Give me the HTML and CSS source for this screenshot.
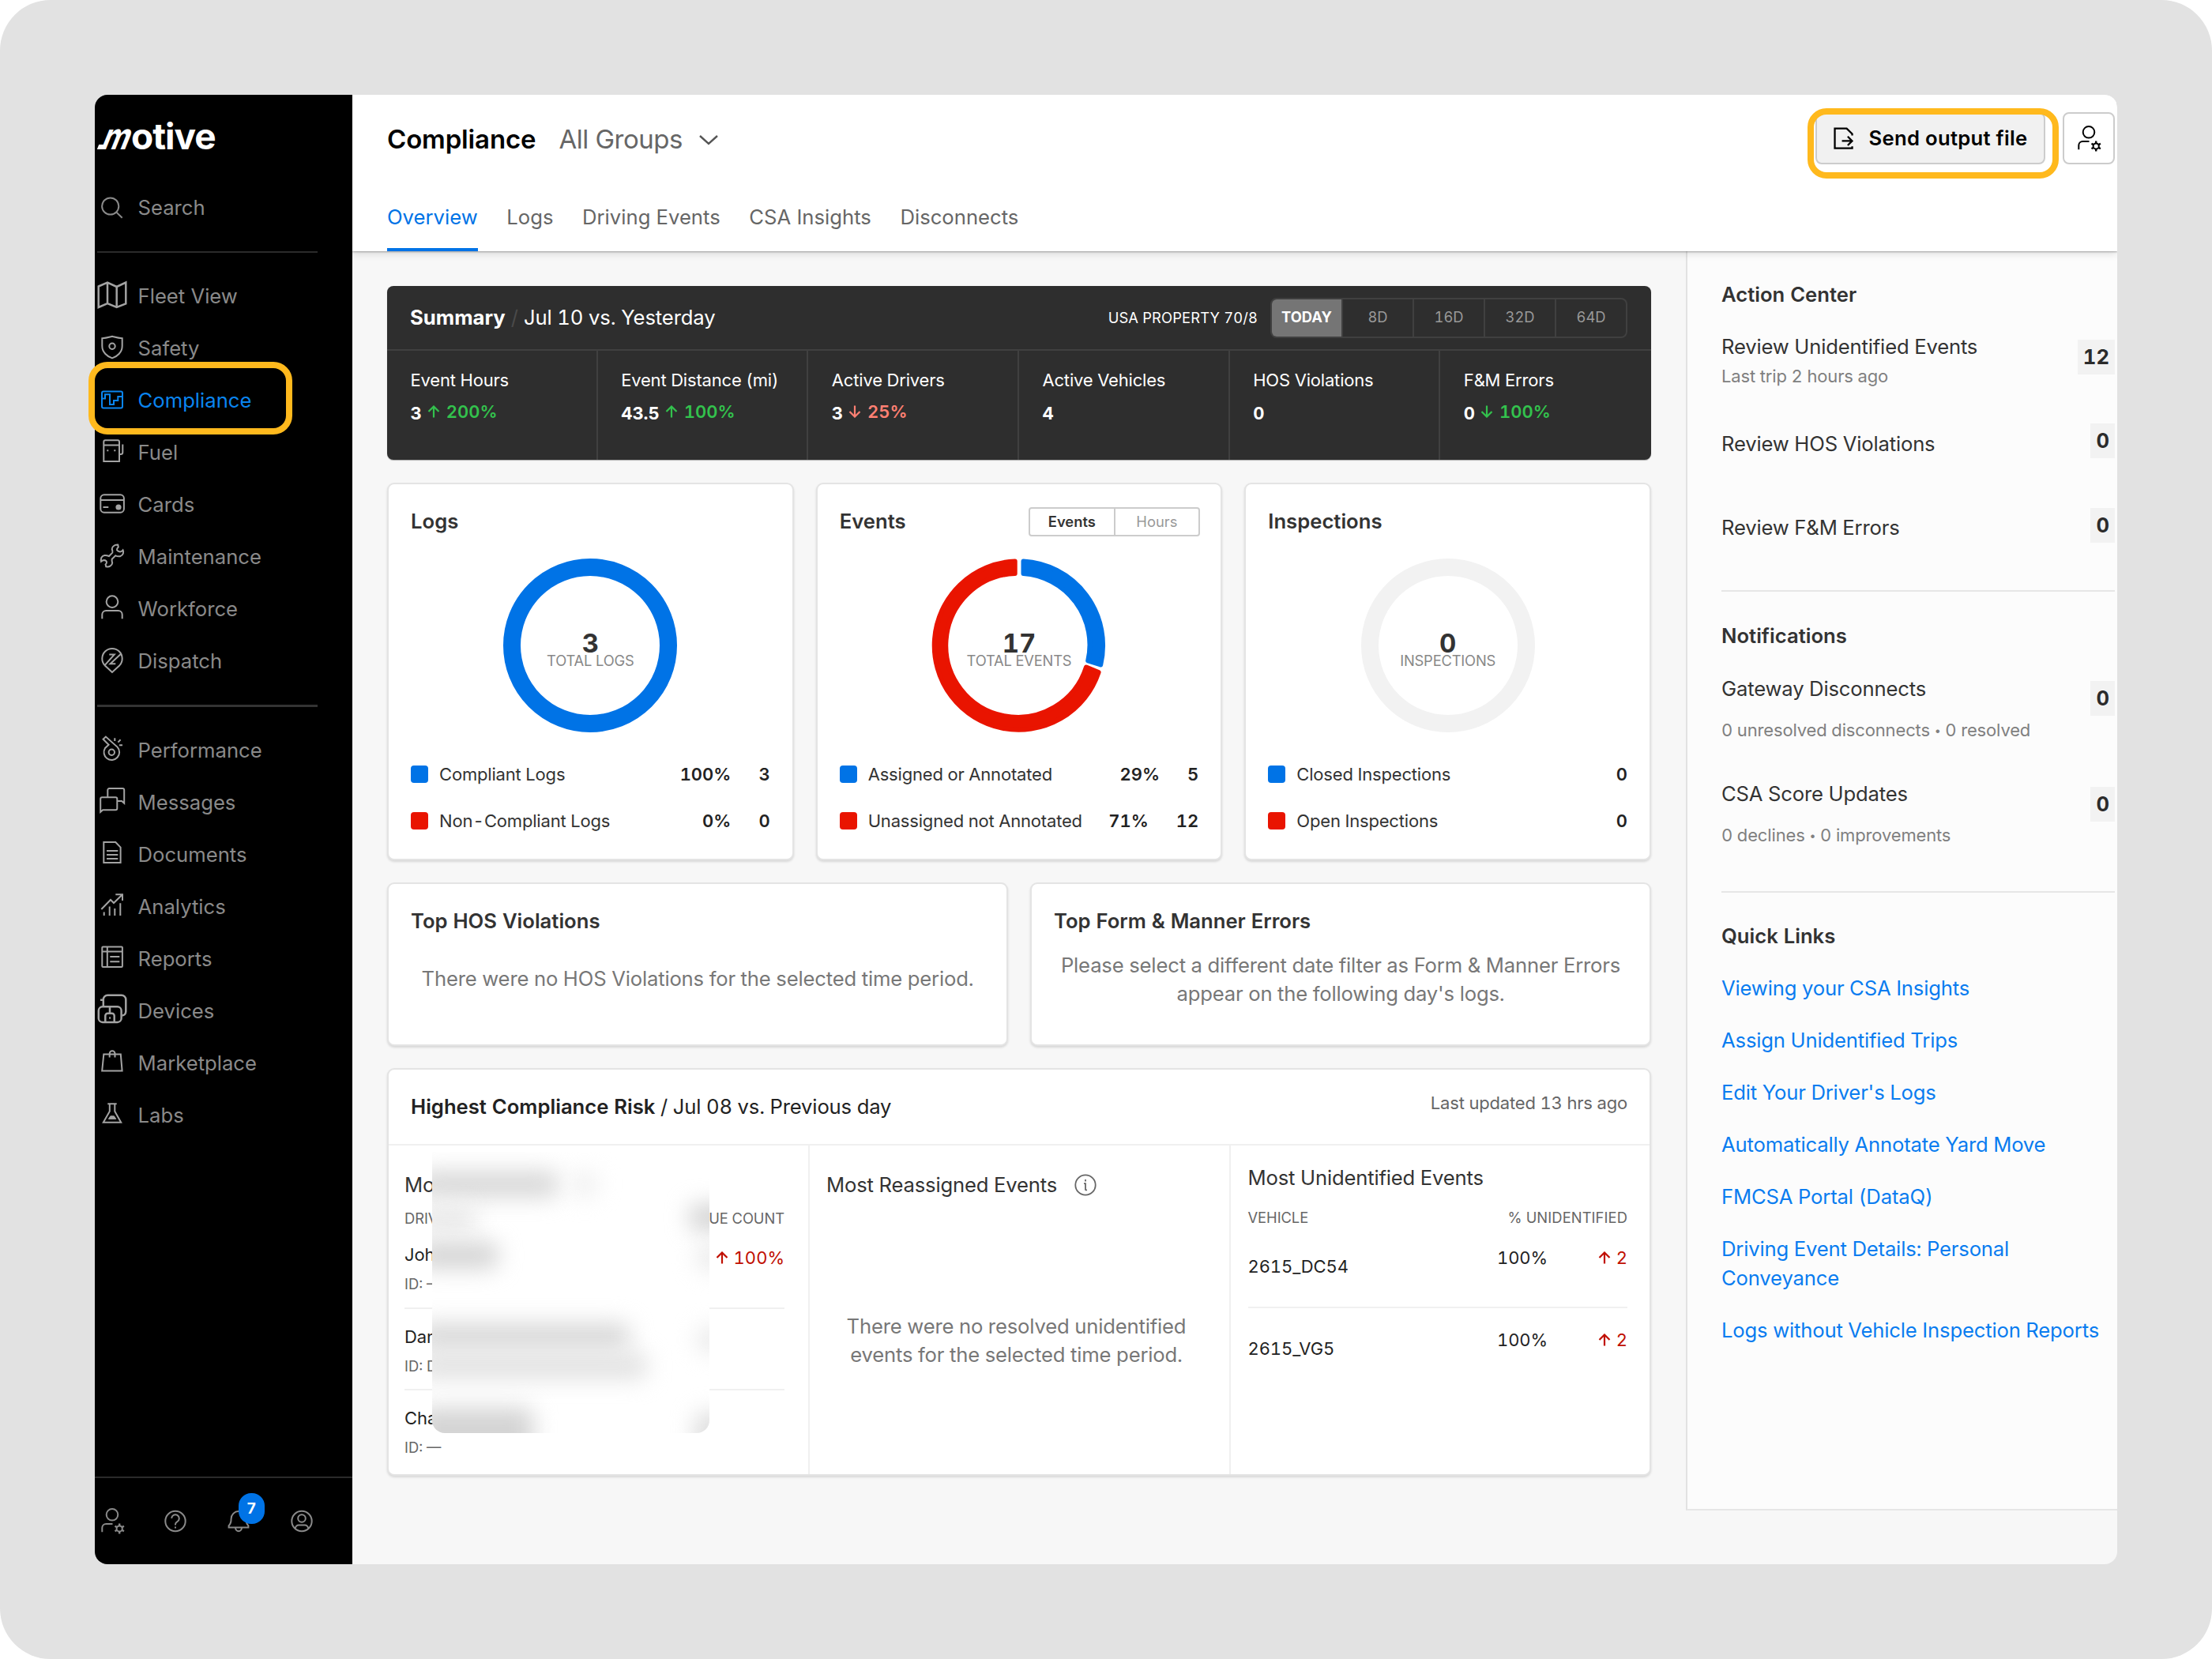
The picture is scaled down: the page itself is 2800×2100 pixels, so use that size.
FILE: index.html
```html
<!DOCTYPE html>
<html lang="en">
<head>
<meta charset="utf-8">
<title>Compliance</title>
<link rel="stylesheet" href="styles.css">
</head>
<body>
<svg class="defs" width="0" height="0" aria-hidden="true">
  <symbol id="user-gear" viewBox="0 0 40 40">
    <circle cx="20" cy="12.3" r="7.3"/>
    <path d="M7.3 34.3V29a5 5 0 0 1 5-5H20.5"/>
    <circle cx="29.2" cy="30" r="3.6"/>
    <path d="M29.2 26.4V23.6M29.2 33.6V36.6M32.3 28.2L34.9 26.7M32.3 31.8L34.9 33.3M26.1 28.2L23.5 26.7M26.1 31.8L23.5 33.3" stroke-width="2.4"/>
  </symbol>
  <symbol id="up" viewBox="0 0 16 16"><path d="M8 15.5V1.5M1.5 8L8 1.5L14.5 8"/></symbol>
  <symbol id="down" viewBox="0 0 16 16"><path d="M8 .5V14.5M1.5 8L8 14.5L14.5 8"/></symbol>
</svg>
<div class="stage">
<div class="app">
  <aside class="sidebar">
    <div class="logo"><span class="logo-m">m</span><span class="logo-rest">otive</span></div>
    <a class="item search"><svg class="icon" viewBox="0 0 40 40"><circle cx="17.7" cy="18" r="10.6"/><path d="M25.3 25.6L32.7 32.8"/></svg>Search</a>
    <div class="sep"></div>
    <nav class="nav">
      <a class="item"><svg class="icon bold" viewBox="0 0 40 40"><path d="M2.7 7.5L14 2.5L25.7 8L37.3 2.5V29.5L25.7 34L14 29L2.7 34ZM14 2.5V29M25.7 8V34"/></svg>Fleet View</a>
      <a class="item"><svg class="icon" viewBox="0 0 40 40"><path d="M7.3 7.2C12 7 16 5.8 20 4.8C24 5.8 28 7 32.7 7.2V17C32.7 25 26 30.5 20 32.4C14 30.5 7.3 25 7.3 17Z"/><circle cx="20" cy="17.3" r="3.7"/></svg>Safety</a>
      <a class="item active"><svg class="icon" viewBox="0 0 40 40"><rect x="7" y="8.5" width="26" height="21" rx="2"/><path d="M7 17.6H11V12.3H17V25H22V20H27.3V15H33"/></svg>Compliance</a>
      <a class="item"><svg class="icon" viewBox="0 0 40 40"><path d="M9.3 31V6.3a2 2 0 0 1 2-2H27a2 2 0 0 1 2 2V31ZM9.3 10.6H29M29 22h1.8a2.5 2.5 0 0 0 2.5-2.5V9.5"/><path d="M13.3 17.3h2M22.3 17.3h2"/></svg>Fuel</a>
      <a class="item"><svg class="icon" viewBox="0 0 40 40"><rect x="5.3" y="7.3" width="29.6" height="22.4" rx="4.5"/><path d="M5.3 14H35M8.5 23H15.3"/><circle cx="28" cy="23" r="2.6" fill="currentColor"/></svg>Cards</a>
      <a class="item"><svg class="icon" viewBox="0 0 40 40"><path d="M27.3 4.6Q24 4.4 22 6Q19.6 7.6 19.7 10Q20.8 12.6 20.3 14.6L16 19Q13 17.8 10.3 18Q7.5 18.6 6.3 21Q5.4 23.6 6 25.8Q8 24 9.7 24Q12.6 24.3 13 26.5Q13.2 28 11.6 29.5L12.3 32.3Q15.5 32.8 17.7 31.3Q20 30 20.2 27.5Q19.3 25 19.7 22.8L24.3 18.3Q27 19.7 30 19.2Q33 18.2 33.8 15.8Q34.8 13.4 33.6 11.3Q32 13.4 30 13.4Q27 13.2 26 11.3Q25.6 9.6 27.8 7.6Z"/></svg>Maintenance</a>
      <a class="item"><svg class="icon" viewBox="0 0 40 40"><circle cx="20" cy="10.6" r="7.3"/><path d="M7.3 32.3V27a5 5 0 0 1 5-5H27.7a5 5 0 0 1 5 5V32.3"/></svg>Workforce</a>
      <a class="item"><svg class="icon" viewBox="0 0 40 40"><path d="M20 34L10.6 25.2A12.7 12.7 0 1 1 29.4 25.2ZM11 24.6L22.8 11.4H16.3M31.3 10.4L17.6 23.2H24.3"/></svg>Dispatch</a>
    </nav>
    <div class="sep thick"></div>
    <nav class="nav">
      <a class="item"><svg class="icon" viewBox="0 0 40 40"><path d="M8.6 5.8L11.9 2.6L26.6 15.6A9.8 9.8 0 1 1 11 17L15.6 12.8Z"/><circle cx="19.3" cy="22.3" r="3.7"/><path d="M23.3 8V4.3M27.4 9.6L30.6 6.3M29 13.2H33"/></svg>Performance</a>
      <a class="item"><svg class="icon" viewBox="0 0 40 40"><path d="M5.2 31.8V15.3a2 2 0 0 1 2-2H24.3a2 2 0 0 1 2 2V27.3a2 2 0 0 1-2 2H8.2ZM14.3 13V4a2 2 0 0 1 2-2H33.2a2 2 0 0 1 2 2V20.8L32.2 18H26.6"/></svg>Messages</a>
      <a class="item"><svg class="icon" viewBox="0 0 40 40"><path d="M9.3 4H24.3L30.6 10.6V30H9.3ZM13 15H27.3M13 20H27.3M13 25H27.3"/></svg>Documents</a>
      <a class="item"><svg class="icon" viewBox="0 0 40 40"><path d="M6.3 23L18 11L22 15L33 4.3M24.3 4.2H33V12M9.7 26.5V31M16.7 19.5V31M23.3 22V31M30.3 15.3V31"/></svg>Analytics</a>
      <a class="item"><svg class="icon" viewBox="0 0 40 40"><rect x="7.3" y="4.4" width="25.6" height="25.6" rx="1"/><path d="M7.3 10.6H33M13.8 4.4V30M17.3 17H29.3M17.3 23.3H29.3"/></svg>Reports</a>
      <a class="item"><svg class="icon bold" viewBox="0 0 40 40"><rect x="2.8" y="14.3" width="28.8" height="19.6" rx="5"/><path d="M17 14.3V22.5M11.3 34V25.7a3 3 0 0 1 3-3H19.7a3 3 0 0 1 3 3V34M5 5.8H8.8M8.8 13.6V5.3a5.5 5.5 0 0 1 5.5-5.5H31.8a5.5 5.5 0 0 1 5.5 5.5V20.5Q37 25 32.5 25.6M16.2 28.4h1.8"/></svg>Devices</a>
      <a class="item"><svg class="icon" viewBox="0 0 40 40"><path d="M9.3 8.6H30.8L32.6 29.4H7.2ZM16.7 12.5V7.6a3.4 3.4 0 0 1 6.8 0V12.5"/></svg>Marketplace</a>
      <a class="item"><svg class="icon" viewBox="0 0 40 40"><path d="M14.3 5.2H25.7M16.8 5.2V14.7L8.8 28.8H31.2L23.3 14.7V5.2"/><path d="M17.8 20.8H22.4L24.8 24.4H15.4Z" fill="currentColor" stroke-width="1"/></svg>Labs</a>
    </nav>
    <div class="foot">
      <svg class="icon"><use href="#user-gear"/></svg>
      <svg class="icon" viewBox="0 0 40 40"><circle cx="20" cy="20.5" r="12.7"/><path d="M15.2 17a4.8 4.8 0 1 1 7.2 4.2Q20 22.6 20 24.6V25.4M20 27.4v2.2"/></svg>
      <span class="bell"><svg class="icon" viewBox="0 0 40 40"><path d="M7.6 26.2Q10.6 23.6 10.6 17.5A9.4 9.4 0 0 1 29.4 17.5Q29.4 23.6 32.4 26.2V28.6H7.6ZM16 28.6a4 4.6 0 0 0 8 0"/></svg><span class="count">7</span></span>
      <svg class="icon" viewBox="0 0 40 40"><circle cx="20" cy="20.5" r="12.7"/><circle cx="20" cy="17" r="4.8"/><path d="M11.6 29.6Q13 25.6 16 25.6H24Q27 25.6 28.4 29.6"/></svg>
    </div>
    <div class="ring ring-nav"></div>
  </aside>

  <div class="main">
    <header class="header">
      <div class="head-row">
        <h1>Compliance</h1>
        <span class="groups">All Groups</span>
        <svg class="chev" viewBox="0 0 24 12"><path d="M1 1L12 11L23 1"/></svg>
        <div class="actions">
          <button class="send"><svg class="send-icon" viewBox="0 0 26 30"><path d="M24.5 10.8V8.8L17.2 1.6H1.6V27.6H24.5V25.2M11 18H24M18.6 12.2L24.4 18L18.6 23.8"/></svg>Send output file</button>
          <button class="gear"><svg class="icon"><use href="#user-gear"/></svg></button>
          <div class="ring ring-send"></div>
        </div>
      </div>
      <nav class="tabs"><a class="on">Overview</a><a>Logs</a><a>Driving Events</a><a>CSA Insights</a><a>Disconnects</a></nav>
    </header>

    <div class="body">
      <div class="content">
        <section class="summary">
          <div class="sum-head">
            <b>Summary</b><i>/</i><span class="vs">Jul 10 vs. Yesterday</span>
            <span class="rule">USA PROPERTY 70/8</span>
            <div class="seg"><span class="on">TODAY</span><span>8D</span><span>16D</span><span>32D</span><span>64D</span></div>
          </div>
          <div class="stats">
            <div><label>Event Hours</label><p><b>3</b><em class="good"><svg><use href="#up"/></svg>200%</em></p></div>
            <div><label>Event Distance (mi)</label><p><b>43.5</b><em class="good"><svg><use href="#up"/></svg>100%</em></p></div>
            <div><label>Active Drivers</label><p><b>3</b><em class="bad"><svg><use href="#down"/></svg>25%</em></p></div>
            <div><label>Active Vehicles</label><p><b>4</b></p></div>
            <div><label>HOS Violations</label><p><b>0</b></p></div>
            <div><label>F&amp;M Errors</label><p><b>0</b><em class="good"><svg><use href="#down"/></svg>100%</em></p></div>
          </div>
        </section>

        <div class="charts">
          <section class="card chart">
            <div class="chart-head"><h2>Logs</h2></div>
            <div class="donut"><svg viewBox="0 0 220 220"><circle cx="110" cy="110" r="99" stroke="#0073e6"/></svg><div class="center"><strong>3</strong><small>TOTAL LOGS</small></div></div>
            <div class="legend"><span class="sw blue"></span>Compliant Logs<b>100%</b><b class="n">3</b></div>
            <div class="legend"><span class="sw red"></span>Non<span class="hy">-</span>Compliant Logs<b>0%</b><b class="n">0</b></div>
          </section>
          <section class="card chart">
            <div class="chart-head"><h2>Events</h2><div class="toggle"><span class="on">Events</span><span>Hours</span></div></div>
            <div class="donut"><svg viewBox="0 0 220 220">
              <g class="slices">
                <path fill="#0073e6" stroke="#0073e6" d="M115.5 3.5A106.7 106.7 0 0 1 213.2 134.5L197.2 129.5A90.5 90.5 0 0 0 115.5 19Z"/>
                <path fill="#e91400" stroke="#e91400" d="M210.6 144A106.7 106.7 0 1 1 104.7 3.5V19A91 91 0 1 0 195 137.5Z"/>
              </g></svg><div class="center"><strong>17</strong><small>TOTAL EVENTS</small></div></div>
            <div class="legend"><span class="sw blue"></span>Assigned or Annotated<b>29%</b><b class="n">5</b></div>
            <div class="legend"><span class="sw red"></span>Unassigned not Annotated<b>71%</b><b class="n">12</b></div>
          </section>
          <section class="card chart">
            <div class="chart-head"><h2>Inspections</h2></div>
            <div class="donut"><svg viewBox="0 0 220 220"><circle cx="110" cy="110" r="99" stroke="#f2f2f2"/></svg><div class="center"><strong>0</strong><small>INSPECTIONS</small></div></div>
            <div class="legend"><span class="sw blue"></span>Closed Inspections<b>0</b></div>
            <div class="legend"><span class="sw red"></span>Open Inspections<b>0</b></div>
          </section>
        </div>

        <div class="tops">
          <section class="card top"><h2>Top HOS Violations</h2><p class="one">There were no HOS Violations for the selected time period.</p></section>
          <section class="card top"><h2>Top Form &amp; Manner Errors</h2><p>Please select a different date filter as Form &amp; Manner Errors<br>appear on the following day's logs.</p></section>
        </div>

        <section class="card risk">
          <div class="risk-head"><b>Highest Compliance Risk</b><span class="when">/ Jul 08 vs. Previous day</span><span class="upd">Last updated 13 hrs ago</span></div>
          <div class="cols">
            <div class="col c1">
              <h3>Most</h3>
              <div class="th"><span>DRIVER</span><span>ISSUE COUNT</span></div>
              <div class="row"><div><span class="name">John</span><span class="id">ID: —</span></div><em class="worse"><svg><use href="#up"/></svg>100%</em></div>
              <div class="row"><div><span class="name">Dan</span><span class="id">ID: D</span></div></div>
              <div class="row last"><div><span class="name">Cha</span><span class="id">ID: —</span></div></div>
              <div class="mask">
                <i class="m1"></i><i class="m2"></i><i class="m3"></i><i class="m4"></i><i class="m5"></i><i class="m6"></i><i class="m7"></i><i class="m8"></i><i class="m9"></i><i class="m10"></i><i class="m11"></i>
              </div>
            </div>
            <div class="col c2">
              <h3>Most Reassigned Events<svg class="info" viewBox="0 0 28 28"><circle cx="14" cy="14" r="12.7"/><path d="M14 7v2.4M12 12.2h2v7.6q0 .9 2 .6" /></svg></h3>
              <p>There were no resolved unidentified<br>events for the selected time period.</p>
            </div>
            <div class="col c3">
              <h3>Most Unidentified Events</h3>
              <div class="th"><span>VEHICLE</span><span class="un">% UNIDENTIFIED</span></div>
              <div class="row"><span class="veh">2615_DC54</span><span class="pct">100%</span><em class="worse"><svg><use href="#up"/></svg>2</em></div>
              <div class="row last"><span class="veh">2615_VG5</span><span class="pct">100%</span><em class="worse"><svg><use href="#up"/></svg>2</em></div>
            </div>
          </div>
        </section>
      </div>

      <aside class="panel">
        <section class="block b1">
          <h2>Action Center</h2>
          <div class="act a1"><div>Review Unidentified Events<small>Last trip 2 hours ago</small></div><span class="badge">12</span></div>
          <div class="act a2"><div>Review HOS Violations</div><span class="badge">0</span></div>
          <div class="act a3"><div>Review F&amp;M Errors</div><span class="badge">0</span></div>
        </section>
        <section class="block b2">
          <h2>Notifications</h2>
          <div class="act n1"><div>Gateway Disconnects<small>0 unresolved disconnects <span class="dot">•</span> 0 resolved</small></div><span class="badge">0</span></div>
          <div class="act n2"><div>CSA Score Updates<small>0 declines <span class="dot">•</span> 0 improvements</small></div><span class="badge">0</span></div>
        </section>
        <section class="block b3">
          <h2>Quick Links</h2>
          <a>Viewing your CSA Insights</a>
          <a>Assign Unidentified Trips</a>
          <a>Edit Your Driver's Logs</a>
          <a>Automatically Annotate Yard Move</a>
          <a>FMCSA Portal (DataQ)</a>
          <a>Driving Event Details: Personal<br>Conveyance</a>
          <a>Logs without Vehicle Inspection Reports</a>
        </section>
      </aside>
    </div>
  </div>
</div>
</div>
</body>
</html>
```
FILE: styles.css
```css
* { box-sizing: border-box; margin: 0; padding: 0; }
body { width: 2800px; height: 2100px; background: #fff; overflow: hidden; font: 400 25.67px/36.67px Inter, "Liberation Sans", sans-serif; color: #333; white-space: nowrap; }
h1, h2, h3 { font-size: 25.67px; line-height: 36.67px; font-weight: 600; }
em, i { font-style: normal; }
svg { fill: none; stroke: currentColor; stroke-width: 2; overflow: visible; display: block; flex: none; }
.defs { position: absolute; }
.stage { width: 2800px; height: 2100px; padding: 120px; background: #e2e2e2; border-radius: 64px; }
.app { display: flex; width: 2560px; height: 1860px; }

/* sidebar */
.sidebar { position: relative; width: 326px; flex: none; background: #000; border-radius: 16px 0 0 16px; display: flex; flex-direction: column; color: #8a8a8a; }
.logo { height: 110px; padding: 22px 0 0 3px; display: flex; align-items: flex-start; color: #fff; font-size: 46px; line-height: 60px; font-weight: 700; }
.logo-m { display: block; width: 43px; padding-left: 4px; transform: skewX(-22deg) scaleX(.82); transform-origin: 0 46.5px; background: linear-gradient(#fff, #fff) 0 41px / 9px 6px no-repeat; }
.logo-rest { letter-spacing: -1px; }
.item { display: flex; align-items: center; height: 66px; padding-left: 1.67px; gap: 12.9px; }
.item .icon { color: #a3a3a3; }
.search .icon { color: #8a8a8a; }
.item.active, .item.active .icon { color: #0a85f0; }
.icon { width: 40px; height: 40px; }
.icon.bold { stroke-width: 2.5; }
.sep { width: 279px; height: 2px; margin: 22px 0 22px 3px; background: #2b2b2b; }
.sep.thick { height: 3px; background: #333; }
.foot { margin-top: auto; height: 111px; border-top: 2px solid #2a2a2a; display: flex; align-items: flex-start; gap: 40.1px; padding: 34px 0 0 1.67px; }
.bell { position: relative; }
.count { position: absolute; left: 20px; top: -15px; width: 33px; height: 39px; border-radius: 16px; background: #0073e6; color: #fff; font-size: 19px; font-weight: 700; line-height: 39px; text-align: center; }
.ring { position: absolute; border: 8px solid #ffb91d; border-radius: 24px; }
.ring-nav { left: -8px; top: 338px; width: 258px; height: 92px; }

/* header */
.main { flex: 1; display: flex; flex-direction: column; background: #f7f7f7; border-radius: 0 16px 16px 0; overflow: hidden; }
.header { position: relative; z-index: 1; height: 198px; flex: none; background: #fff; box-shadow: 0 1px 2px rgba(0,0,0,.3), 0 3px 10px rgba(0,0,0,.13); display: flex; flex-direction: column; }
.head-row { display: flex; align-items: center; height: 113px; padding-left: 44px; }
h1 { font-size: 33px; color: #000; margin-right: 29px; letter-spacing: -.15px; }
.groups { font-size: 33px; color: #666; letter-spacing: -.5px; }
.chev { width: 24px; height: 12px; margin-left: 21px; color: #555; stroke-width: 2.4; }
.actions { position: relative; display: flex; margin: -3px 3px 0 auto; gap: 22px; }
button { font: inherit; height: 66px; border: 2px solid #ccc; border-radius: 8px; background: #fff; color: #000; display: flex; align-items: center; justify-content: center; }
.send { width: 291px; background: #f1f1f1; font-weight: 600; letter-spacing: .28px; gap: 20px; }
.send-icon { width: 25px; height: 29px; stroke-width: 2.4; }
.gear { width: 66px; stroke-width: 2.2; }
.ring-send { left: -10px; top: -5px; width: 318px; height: 89px; }
.tabs { display: flex; gap: 36.6px; padding: 23px 0 0 44px; }
.tabs a { height: 62px; line-height: 38px; color: #666; }
.tabs .on { color: #0073e6; border-bottom: 4px solid #0073e6; }

/* content */
.body { flex: 1; display: flex; justify-content: space-between; letter-spacing: -.18px; font-variant-numeric: tabular-nums; }
.body h2 { letter-spacing: 0; }
.content { width: 1600px; margin: 44px 0 0 44px; }
.summary { height: 220px; border-radius: 8px; background: #2e2e2e; color: #fff; box-shadow: 0 1px 1px rgba(0,0,0,.3); }
.sum-head { height: 82px; border-bottom: 2px solid #404040; display: flex; align-items: center; padding: 0 30px 0 29px; }
.sum-head b { font-weight: 700; letter-spacing: 0; }
.sum-head i { color: #4a4a4a; margin: 0 7px; }
.vs { letter-spacing: -.13px; }
.rule { margin-left: auto; margin-right: 16px; font-size: 18.33px; letter-spacing: .15px; }
.seg { display: flex; height: 51px; border: 2px solid #404040; border-radius: 8px; overflow: hidden; letter-spacing: 0; }
.seg span { width: 90px; text-align: center; font-size: 18.33px; line-height: 45px; color: #999; border-left: 2px solid #404040; }
.seg span:first-child { border-left: 0; width: 88px; }
.seg .on { background: #757575; color: #fff; font-weight: 700; }
.stats { display: grid; grid-template-columns: repeat(6, 1fr); height: 138px; font-size: 22px; line-height: 30px; }
.stats > div { padding: 22px 0 0 29.5px; border-right: 2px solid #404040; }
.stats > div:last-child { border: 0; }
.stats label { display: block; }
.stats p { display: flex; align-items: flex-start; height: 32px; margin-top: 10px; letter-spacing: 0; }
.stats b { font-weight: 700; padding-top: 2px; }
.stats em { display: flex; align-items: center; margin-left: 7px; font-weight: 600; gap: 8px; }
em svg { width: 16px; height: 16px; stroke-width: 2.2; }
.good { color: #33c24d; }
.bad { color: #ff8073; }

.card { background: #fff; border: 2px solid #e4e4e4; border-radius: 9px; box-shadow: 0 2px 3px rgba(0,0,0,.13); }
.charts { display: flex; gap: 28px; margin-top: 29px; }
.chart { width: 514.67px; height: 478px; padding: 0 28px; }
.chart-head { display: flex; justify-content: space-between; align-items: center; height: 94px; }
.toggle { display: flex; border: 2px solid #ccc; border-radius: 4px; height: 37px; margin-right: -1.5px; font-size: 18.33px; line-height: 33px; letter-spacing: 0; }
.toggle span { width: 105px; text-align: center; color: #999; }
.toggle .on { color: #333; font-weight: 600; border-right: 2px solid #ccc; width: 108px; }
.donut { display: grid; width: 220px; height: 220px; margin: 0 auto 24px; }
.donut > * { grid-area: 1 / 1; }
.donut circle { stroke-width: 22; }
.slices path { stroke-width: 6; stroke-linejoin: round; }
.center { display: flex; flex-direction: column; align-items: center; padding-top: 92px; }
.center strong { font-size: 33px; line-height: 30px; font-weight: 700; }
.center small { font-size: 18.33px; line-height: 15px; color: #888; }
.legend { display: flex; align-items: center; height: 58.67px; font-size: 22px; }
.sw { width: 22px; height: 22px; border-radius: 4px; margin-right: 14px; }
.hy { margin: 0 .3px; }
.blue { background: #0073e6; }
.red { background: #e91400; }
.legend b { font-weight: 600; margin-left: auto; color: #222; letter-spacing: 0; }
.legend .n { margin-left: 35px; }

.tops { display: flex; gap: 28px; margin-top: 28px; }
.top { width: 786px; height: 207px; padding: 29px 28px; }
.top p { color: #777; text-align: center; margin-top: 19px; letter-spacing: -.18px; }
.top .one { margin-top: 36px; }

.risk { margin-top: 28px; height: 516px; }
.risk-head { display: flex; align-items: center; height: 96px; padding: 0 28px; border-bottom: 2px solid #f0f0f0; color: #222; }
.risk-head b { font-weight: 600; margin-right: 6.5px; letter-spacing: 0; }
.upd { margin-left: auto; font-size: 22px; color: #666; padding-bottom: 9px; }
.cols { display: flex; height: 416px; }
.col { position: relative; width: 533px; border-right: 2px solid #f0f0f0; padding: 0 29px 0 21px; }
.col h3 { font-weight: 400; }
.c1 { padding: 0 30px 0 20px; }
.c1 h3, .c2 h3 { margin-top: 32px; display: flex; align-items: center; }
.c3 { border: 0; padding: 0 28px 0 21.5px; width: 530px; }
.c3 h3 { margin-top: 23px; margin-bottom: 16.5px; }
.info { width: 28px; height: 28px; margin-left: 22px; color: #666; stroke-width: 1.8; }
.th { display: flex; justify-content: space-between; font-size: 18.33px; line-height: 30px; margin-top: 8px; color: #666; letter-spacing: -.05px; }
.un { letter-spacing: .1px; }
.row { height: 103px; border-bottom: 2px solid #f0f0f0; font-size: 22px; line-height: 30px; color: #222; display: flex; letter-spacing: -.1px; }
.th + .row { height: 100px; }
.row.last { border: 0; }
.c1 .row { justify-content: space-between; padding-top: 16.5px; }
.c1 .row + .row { padding-top: 20.5px; }
.name, .id { display: block; }
.id { font-size: 18.33px; margin-top: 7px; color: #666; letter-spacing: 0; }
.worse { color: #c00e00; display: flex; gap: 7px; align-items: center; height: 30px; letter-spacing: 0; }
.c1 .worse { margin-top: 4px; }
.c2 p { text-align: center; color: #777; margin-top: 142px; }
.c3 .row { padding-top: 21px; }
.c3 .row + .row { padding-top: 25px; }
.veh { margin-top: 10.5px; }
.pct { margin-left: auto; }
.c3 .worse { width: 101px; justify-content: flex-end; }
/* redaction over driver names */
.mask { position: absolute; left: 55px; top: 8px; width: 351px; height: 356px; border-radius: 0 0 16px 16px; background: #fff; overflow: hidden; }
.mask i { position: absolute; background: #d8d8d8; border-radius: 12px; filter: blur(14px); }
.mask .m1 { left: -20px; top: 24px; width: 180px; height: 34px; }
.mask .m2 { left: 178px; top: 24px; width: 30px; height: 34px; background: #efefef; }
.mask .m3 { left: -20px; top: 68px; width: 76px; height: 32px; background: #e8e8e8; }
.mask .m4 { left: 325px; top: 66px; width: 60px; height: 34px; background: #d4d4d4; }
.mask .m5 { left: -20px; top: 114px; width: 104px; height: 34px; background: #d4d4d4; }
.mask .m6 { left: 335px; top: 118px; width: 40px; height: 32px; background: #eaeaea; }
.mask .m7 { left: -20px; top: 216px; width: 270px; height: 36px; background: #dadada; }
.mask .m8 { left: -20px; top: 254px; width: 292px; height: 34px; background: #e2e2e2; }
.mask .m9 { left: 335px; top: 222px; width: 40px; height: 32px; background: #eaeaea; }
.mask .m10 { left: -20px; top: 324px; width: 148px; height: 60px; background: #d4d4d4; }
.mask .m11 { left: 332px; top: 330px; width: 50px; height: 60px; background: #dedede; }

/* right panel */
.panel { width: 546px; height: 1594px; background: #fcfcfc; border-left: 2px solid #e2e2e2; border-bottom: 2px solid #e6e6e6; padding: 37px 3px 0 43px; }
.block { border-bottom: 2px solid #e6e6e6; }
.b1 { height: 394px; }
.b2 { height: 381px; padding-top: 38px; }
.b3 { border: 0; padding-top: 37px; }
.act { display: flex; justify-content: space-between; align-items: flex-start; }
.act small { display: block; font-size: 22px; line-height: 30px; color: #808080; letter-spacing: -.15px; }
.dot { font-size: .65em; vertical-align: .16em; }
.badge { background: #f2f2f2; font-weight: 700; font-size: 25.67px; line-height: 44px; height: 44px; padding: 0 7px; color: #2b2b2b; letter-spacing: 0; }
.a1 { margin-top: 29.5px; height: 123px; }
.a1 small { margin-top: 3px; }
.a1 .badge { margin-top: 9px; }
.a2, .a3 { height: 106px; }
.a2 .badge, .a3 .badge { margin-top: -8px; }
.a3 .badge { margin-top: -7px; }
.n1 { margin-top: 30px; height: 133px; }
.n1 small, .n2 small { margin-top: 19px; }
.n1 .badge { margin-top: 8px; }
.n2 .badge { margin-top: 9.5px; }
.b3 a { display: block; margin-top: 29.33px; color: #0a7cf0; }
```
